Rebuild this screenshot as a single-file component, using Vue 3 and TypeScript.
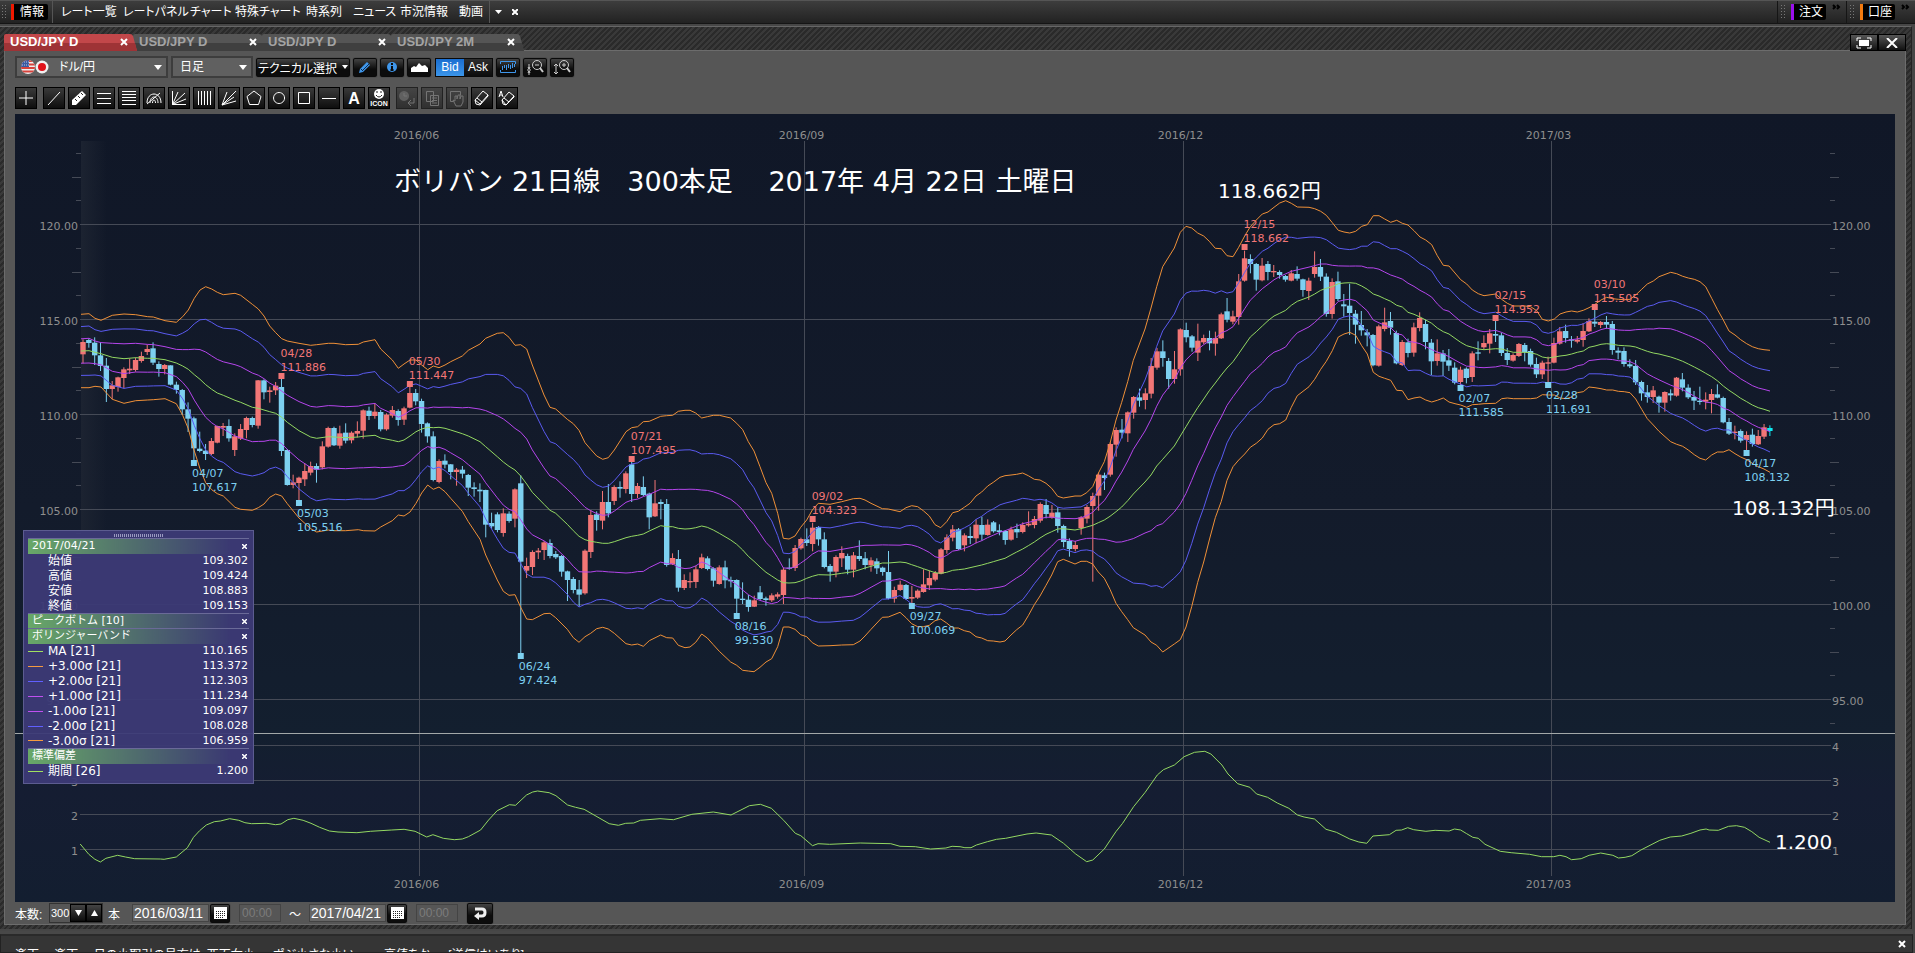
<script setup lang="ts">
import { ref } from 'vue'

interface Candle { x: number; up: boolean; high: number; top: number; bottom: number; low: number; live: boolean }
interface Peak { index: number; y: number; high: boolean; date: string; value: string }
interface Icon { name: string; d: string; fill?: string; dim?: boolean; gap?: boolean; text?: string }

const menus = ['レート一覧', 'レートパネル', 'チャート', '特殊チャート', '時系列', 'ニュース', '市況情報', '動画']
const tabs = ['USD/JPY D', 'USD/JPY D', 'USD/JPY D', 'USD/JPY 2M']
const price = ref('Bid')
const barCount = ref('300')
const fromDate = ref('2016/03/11')
const toDate = ref('2017/04/21')

const tools: Icon[] = [
  { name: '十字カーソル', d: 'M10 3v14M3 10h14' },
  { name: 'トレンドライン', d: 'M4 17L16 4', gap: true },
  { name: '定規', d: 'M6 11l2 2M9 8l2 2M12 5l2 2', fill: 'M3 12L13 3l4 4L7 17H3z' },
  { name: '平行線', d: 'M3 5.500h14M3 10.500h14M3 15.500h14' },
  { name: 'フィボナッチ', d: 'M3 3.500h14M3 6.500h14M3 9.500h14M3 12.500h14M3 16.500h14' },
  { name: 'アーク', d: 'M3 15c0-12 14-12 14 0M6 15c0-8 8-8 8 0M8.500 15c0-4 3-4 3 0M3 16L16 5' },
  { name: 'ファン', d: 'M3.500 3v13.500H17M3.500 16.500L9 4M3.500 16.500L16 5M3.500 16.500L17 11' },
  { name: 'タイムゾーン', d: 'M4.500 3v14M7.500 3v14M10.500 3v14M13.500 3v14M16.500 3v14' },
  { name: 'ギャン', d: 'M3 17L8 4M3 17L17 3M3 17L15 9M3 17L17 13' },
  { name: '五角形', d: 'M10 3L17 8.500L14.500 16.500H5.500L3 8.500z' },
  { name: '円', d: 'M10 4.500a5.500 5.500 0 1 0 .1 0z' },
  { name: '四角形', d: 'M4.500 4.500h11v11h-11z' },
  { name: '水平線', d: 'M3 10.500h14' },
  { name: '文字', d: '', text: 'A' },
  { name: 'アイコン', d: '', text: 'ICON' },
  { name: '履歴', d: 'M7 8V5M7 8h3M17 10v5h-5M14 12l-3 3 3 3', fill: 'M7 3a5 5 0 1 0 .1 0z', dim: true, gap: true },
  { name: 'コピー', d: 'M4.500 3.500h7v10h-7zM8.500 7.500h8v10h-8zM10 10h5M10 12.500h5M10 15h5', dim: true },
  { name: '移動', d: 'M3.500 3.500h10v4M3.500 3.500v10h3M8 16l-2-4 2 1V8l2 0v3l1-4h2v4l1-3h2v6l-2 4H9z', dim: true },
  { name: '消去', d: 'M3 12L11 3l5 4-8 9zM3 12l1 4 4 1 8-9V7M5 10l5 4' },
  { name: '全消去', d: 'M5 12l7-8 5 4-8 9zM5 12l1 4 3 1 8-8V8M7 10l5 4M2 9l2-6 2 6M3 7h2' },
]

const STEP = 5.837
const FIRST_X = 83
const plotX = (i: number) => FIRST_X + i * STEP

// Each block: baseline y, then one row per session "direction high top bottom low" in thirds of a pixel.
const candleBlocks: { base: number; rows: string }[] = [
  { base: 260, rows: 'u238,246,283,310 d236,240,249,263 d232,248,286,315 d248,286,318,333 d294,317,387,426 u363,376,387,418 u350,352,381,395 u322,328,354,385 u296,326,331,342 u293,300,330,335 u275,288,303,308 u254,267,276,285 d247,265,308,315 d304,312,327,350 u312,315,327,343 d316,316,374,376 d365,374,390,401 d387,390,448,465 d427,448,476,516 d470,475,565,600 d515,566,573,577 d552,572,582,600 u534,543,582,585 u497,498,548,550 u489,498,503,528 d478,498,535,545 u520,529,570,588 u492,507,536,540 u470,474,510,535 d470,474,495,502 u360,361,497,506 d358,361,397,418 u380,391,396,428 u366,377,391,405 d345,381,573,588 d567,570,675,677 u644,667,675,685 u650,653,669,725 u610,633,658,678 u605,618,638,646 d610,618,629,668 u544,559,622,628 u500,504,560,563 d500,504,556,558 u497,520,557,566 d490,518,542,550 u514,518,541,550 u484,513,521,532 u448,451,512,536 d440,452,468,480 u430,455,468,476 d450,456,508,514 u460,464,508,512 u438,450,467,473 d448,453,480,497 u440,445,479,495 u380,399,443,445 d387,399,424,436 d416,423,492,518 d487,490,529,548 d514,529,660,664 u598,603,666,670 d583,602,614,625 d612,613,636,658 u624,629,636,677 d618,629,641,655 d642,645,683,708 d667,682,687,710' },
  { base: 340, rows: 'd430,449,454,486 d449,450,554,592 d518,549,559,566 d517,523,570,577 u505,520,579,590 d514,521,543,548 u445,448,536,562 d406,430,665,940 u653,678,692,714 u631,636,681,705 u624,632,637,657 u603,607,630,660 d598,609,648,655 d633,642,652,657 d645,648,695,710 d692,694,720,783 d711,717,750,760 d720,748,764,800 u628,632,760,764 u510,525,636,654 d514,523,540,572 u453,486,542,568 d432,486,520,532 u436,441,483,495 d424,441,446,473 u394,400,447,460 d365,373,462,486 u429,438,462,474 d409,441,465,468 d458,461,532,568 u420,490,529,531 d478,486,492,538 d477,492,675,680 u640,654,673,675 d630,657,743,755 u703,720,744,750 u697,723,727,744 u677,688,726,744 u641,652,684,687 d649,655,687,691 d682,685,722,740 u676,682,732,734 d662,682,721,745 d710,720,724,742 d718,720,776,822 d727,776,780,792 d765,779,801,815 u767,781,800,801 d738,757,777,780 d770,775,780,797 u760,766,781,786 u757,763,770,776 u683,689,765,792 d655,683,686,689 u615,624,684,693 u593,597,625,629 d565,598,609,618 u548,563,612,634 d558,561,598,617 d577,598,681,685 d672,678,695,725 u646,651,695,712 u619,639,655,681 d641,648,689,703 u636,646,689,712 d601,648,657,663 d636,655,675,688 u652,661,676,695 d655,664,685,702' },
  { base: 380, rows: 'd560,563,576,587 d513,576,656,658 u620,630,656,668 u602,614,630,633 d612,615,657,660 u618,651,656,672 u628,632,653,657 u568,613,636,638 u572,594,616,630 u573,579,599,604 u504,508,581,583 u463,472,510,521 u435,448,473,484 d444,448,507,510 u460,466,496,514 d440,468,474,492 u418,434,475,490 d410,435,464,482 u418,434,465,467 d423,427,454,458 d433,451,456,466 d450,453,480,494 u440,448,479,482 d431,447,457,474 u427,435,456,460 u394,431,436,440 u408,417,435,445 u367,372,422,428 d357,375,402,415 u375,398,413,416 d382,397,438,458 d434,438,486,502 d475,483,507,530 u483,495,507,514 u408,412,444,464 u375,381,416,430 u338,348,378,605 u278,284,347,392 d278,286,294,330 u187,192,284,290 u142,150,194,230 d117,149,158,175 u94,97,160,186 u48,51,98,116 d26,52,62,80 u25,40,60,88' },
  { base: 180, rows: 'u534,558,641,655 u504,514,563,569 d481,514,534,560 d534,543,597,626 u513,568,597,611 u445,448,568,587 d428,450,472,487 d465,469,503,515 u431,482,518,543 u464,474,487,492 d452,474,490,511 u455,474,491,527 u398,403,475,477 d354,394,419,427 u392,409,425,433 u282,304,411,434 u212,235,302,305 d223,237,252,280 d249,252,299,332 u234,257,301,304 d243,252,276,301 u255,273,277,291 d271,276,285,296 d285,288,299,305 u270,280,302,304 d259,282,296,302 d296,298,330,350 u293,302,333,360 u214,261,282,293 d237,261,290,303 d280,290,402,410 u295,306,402,416 d275,304,357,363 d342,373,379,410 d311,377,399,465 d390,401,434,491 d393,435,451,467 d447,457,466,499 d462,465,556,559 u434,439,557,560 u383,427,447,454 d396,423,443,464 d452,459,550,553 u480,486,555,558 d476,487,519,532 u428,442,518,530 u397,414,444,454 d419,432,486,508 d477,488,544,585 u478,520,543,557 d510,520,545,588 d507,541,557,573 d547,563,608,613 u560,569,606,620 d562,566,594,610 u514,520,591,606 d484,517,521,541 u466,489,502,507 u447,460,491,520' },
  { base: 250, rows: 'd205,252,257,276 d248,256,309,318 d294,309,330,345 u310,315,332,335 u279,282,318,321 d279,285,307,334 d296,303,344,350 d323,342,373,384 u332,338,373,387 u320,337,341,400 u263,279,338,340 u231,244,281,284 d224,243,264,278 d258,268,272,293 u258,269,275,280 u219,243,270,290 u205,213,244,246 d175,215,221,231 u213,216,225,234 d198,216,224,236 d213,222,300,314 d292,302,308,328 d292,303,342,350 d328,343,349,354 d330,348,397,405 d392,396,430,452 d405,427,441,458 u408,421,441,459 d437,440,458,488 u424,426,458,485 d418,430,436,452 u381,383,437,440 d369,388,413,424 d403,413,442,447 d423,441,452,480 d410,452,456,464 u427,449,455,478 u417,432,450,490 d403,433,443,445 d440,444,517,520 d504,516,551,555 u527,545,549,568 d538,543,572,578 u544,555,570,600 d536,554,582,590 u540,558,583,585 u522,532,560,567 d526,534,543,558' },
]

const candles: Candle[] = candleBlocks
  .flatMap(block => block.rows.split(' ').map(row => ({
    up: row[0] === 'u',
    v: row.slice(1).split(',').map(n => block.base + Number(n) / 3),
  })))
  .map(({ up, v }, i, all) => ({
    x: plotX(i), up, high: v[0], top: v[1], bottom: v[2], low: v[3], live: i === all.length - 1,
  }))

// Moving average and +3σ readings "x,average,upper"; the other bands are spaced evenly from these two.
const bandBlocks: { x: number; y: number; rows: string }[] = [
  { x: 0, y: 260, rows: '243,273,163 267,272,161 285,277,175 303,281,181 337,292,166 372,296,162 407,293,164 443,295,170 460,295,171 495,299,182 529,309,187 548,318,170 565,328,150 583,344,115 600,358,90 617,374,80 635,388,87 652,399,97 670,406,104 705,421,100 722,427,106 757,442,133 775,445,147 792,450,168 809,455,198 827,460,218 845,472,236 862,487,243 897,512,250 932,531,256 950,535,254 985,530,250 1002,531,250 1037,533,254 1075,531,253 1090,529,246 1125,526,239 1142,534,267 1177,541,300 1195,545,325 1212,540,312 1230,528,300 1248,515,300 1265,507,315 1283,502,329 1300,503,318 1317,502,323 1335,505,315 1352,510,305 1387,521,288 1405,528,271' },
  { x: 400, y: 340, rows: '240,305,12 257,320,-5 292,350,-20 310,366,-22 327,379,-8 345,390,16 362,408,14 380,432,27 397,457,75 432,493,165 450,511,202 467,520,207 502,553,238 520,572,251 537,589,271 555,599,308 572,604,328 590,607,348 608,610,358 625,610,353 643,605,330 678,593,275 695,589,263 713,586,260 730,582,245 748,573,244 782,557,229 800,560,227 818,560,226 835,565,214 855,567,211 870,566,211 887,563,219 905,558,234 922,562,230 940,570,226 958,580,226 992,600,234 1010,613,250 1028,630,269 1045,649,305 1062,664,333 1080,681,380 1098,697,428 1115,708,460 1133,720,520 1150,728,595 1167,729,597 1185,728,588 1202,723,562 1220,715,540 1237,709,510 1255,704,490 1290,705,493 1325,700,485 1360,695,476' },
  { x: 800, y: 380, rows: '180,569,355 195,564,360 213,559,370 247,549,386 265,549,387 300,546,395 318,548,383 335,554,377 353,560,380 370,566,392 388,572,408 405,578,434 422,580,443 440,577,425 458,571,398 475,569,394 493,567,382 510,563,370 528,559,348 545,555,336 563,550,318 580,545,307 600,539,292 615,535,287 633,525,285 650,516,283 668,507,279 685,497,287 703,486,298 720,474,300 738,463,310 755,455,325 773,447,349 790,446,354 825,450,348 843,446,348 860,441,338 878,436,320 895,428,280 913,420,245 930,409,190 948,395,120 965,381,67 983,362,5 1000,342,-59 1035,306,-153 1053,285,-216' },
  { x: 1080, y: 180, rows: '230,858,320 248,838,260 283,798,204 301,768,157 318,740,139 335,712,144 353,683,159 371,657,168 388,632,184 406,609,205 424,585,206 441,564,227 459,545,230 476,521,202 494,495,168 511,471,140 529,455,120 547,438,102 564,422,96 582,408,82 599,400,69 617,391,62 634,376,70 652,364,81 687,351,82 704,342,86 722,331,94 739,325,106 757,320,128 775,311,151 792,309,156 809,308,159 827,310,154 845,318,139 862,328,134 880,342,107 897,348,107 914,356,117 932,364,127 950,376,121 967,381,130 984,397,135 1002,403,152 1020,411,171 1037,420,180 1055,430,194 1072,444,227 1090,455,256 1107,462,258 1125,475,279 1142,487,299 1160,497,312 1177,502,330 1195,507,341 1212,509,347 1247,506,342' },
  { x: 1440, y: 250, rows: '185,297,148 202,302,160 220,307,168 255,307,168 272,308,170 290,313,182 307,321,208 325,324,213 343,321,207 360,318,192 378,316,186 395,312,183 412,307,186 430,303,181 447,292,173 465,288,163 483,283,150 500,281,142 518,283,146 535,286,148 553,287,149 570,288,148 587,291,135 605,298,118 622,304,102 640,309,93 657,312,80 692,321,67 710,327,71 728,334,79 745,342,84 763,351,88 780,360,95 797,370,110 815,380,145 832,392,178 850,408,210 867,421,243 885,433,255 902,445,269 920,455,281 937,465,290 955,473,296 972,478,299 990,484,301' },
]

const bandPoints = bandBlocks.flatMap(b => b.rows.split(' ').map(row => {
  const [x, ma, up] = row.split(',').map(Number)
  return { x: b.x + x / 3, ma: b.y + ma / 3, sigma: (ma - up) / 9 }
}))

const bands = [
  { k: 3, color: '#ef9038' }, { k: -3, color: '#ef9038' },
  { k: 2, color: '#5a5af0' }, { k: -2, color: '#5a5af0' },
  { k: 1, color: '#b545ec' }, { k: -1, color: '#b545ec' },
  { k: 0, color: '#93d862' },
].map(b => ({
  ...b,
  points: bandPoints.map(p => `${p.x.toFixed(1)},${(p.ma - b.k * p.sigma).toFixed(1)}`).join(' '),
}))

const deviationBlocks: { x: number; scale: number; rows: string }[] = [
  { x: 0, scale: 1.6333, rows: '131,432 145,463 155,478 164,486 173,475 192,466 205,471 220,476 262,477 268,478 288,471 306,443 316,412 326,392 337,375 350,365 360,363 375,356 390,361 400,368 411,371 436,370 450,374 459,372 470,359 480,355 495,361 508,370 522,382 538,393 552,396 583,398 605,394 640,390 660,388 678,394 697,411 707,404 724,415 742,419 755,417 765,410 785,390 798,360 812,332 832,314 842,316 860,285 870,276 878,273 897,278 908,287 927,315 940,322 954,328 975,350 995,371 1010,376 1022,370 1035,369 1046,361 1078,356 1100,359 1130,343 1165,336 1194,345 1224,317 1242,313 1260,325 1280,361 1299,400 1308,407 1327,437 1336,431 1355,433 1405,429 1455,431 1470,439 1495,440 1520,447 1545,444 1555,439' },
  { x: 960, scale: 1.6419, rows: '0,440 8,443 18,443 27,435 45,425 60,418 75,415 110,402 125,399 150,405 170,430 190,462 208,485 218,480 237,447 256,395 267,370 285,320 304,277 324,225 334,209 352,195 368,170 385,157 402,154 412,162 430,195 440,222 456,251 476,262 487,282 505,292 521,309 540,325 554,345 565,351 582,357 601,388 618,397 640,417 655,426 668,430 678,408 705,404 716,391 725,390 735,383 745,389 765,394 780,391 803,393 812,387 822,390 832,401 842,412 851,415 862,433 887,454 905,458 935,463 955,470 975,470 985,466 995,470 1004,479 1020,476 1033,466 1052,459 1072,466 1081,474 1092,472 1103,467 1118,450 1149,421 1166,411 1185,408 1200,400 1215,390 1225,387 1230,390 1245,391 1262,379 1275,377 1288,382 1300,395 1312,412 1330,427' },
]
const deviation = deviationBlocks.flatMap(b => b.rows.split(' ').map(row => {
  const [x, y] = row.split(',').map(Number)
  return `${(b.x + x / b.scale).toFixed(1)},${(700 + y / 3).toFixed(1)}`
})).join(' ')

const peaks: Peak[] = [
  { index: 19, y: 463, high: false, date: '04/07', value: '107.617' },
  { index: 34, y: 376, high: true, date: '04/28', value: '111.886' },
  { index: 37, y: 503, high: false, date: '05/03', value: '105.516' },
  { index: 56, y: 384, high: true, date: '05/30', value: '111.447' },
  { index: 75, y: 656, high: false, date: '06/24', value: '97.424' },
  { index: 94, y: 459, high: true, date: '07/21', value: '107.495' },
  { index: 112, y: 616, high: false, date: '08/16', value: '99.530' },
  { index: 125, y: 519, high: true, date: '09/02', value: '104.323' },
  { index: 142, y: 606, high: false, date: '09/27', value: '100.069' },
  { index: 199, y: 247, high: true, date: '12/15', value: '118.662' },
  { index: 236, y: 388, high: false, date: '02/07', value: '111.585' },
  { index: 242, y: 318, high: true, date: '02/15', value: '114.952' },
  { index: 251, y: 385, high: false, date: '02/28', value: '111.691' },
  { index: 259, y: 307, high: true, date: '03/10', value: '115.505' },
  { index: 285, y: 453, high: false, date: '04/17', value: '108.132' },
]

const priceLevels = [120, 115, 110, 105, 100, 95]
const priceY = (v: number) => Math.round(224 + (120 - v) * 19) + 0.5
const ticks = Array.from({ length: 25 }, (_, i) => ({ v: 123.75 - i * 1.25, long: i % 2 === 1 }))
  .filter(t => t.v % 5 !== 0)
const levels = [4, 3, 2, 1]
const levelY = (v: number) => Math.round(745 + (4 - v) * 34.6) + 0.5
const months = [
  { x: 419.5, label: '2016/06' }, { x: 804.5, label: '2016/09' },
  { x: 1183.5, label: '2016/12' }, { x: 1551.5, label: '2017/03' },
]

const legend = [
  { head: '2017/04/21' },
  { name: '始値', value: '109.302' }, { name: '高値', value: '109.424' },
  { name: '安値', value: '108.883' }, { name: '終値', value: '109.153' },
  { head: 'ピークボトム [10]' },
  { head: 'ボリンジャーバンド' },
  { name: 'MA [21]', value: '110.165', tone: 'green' },
  { name: '+3.00σ [21]', value: '113.372', tone: 'orange' },
  { name: '+2.00σ [21]', value: '112.303', tone: 'blue' },
  { name: '+1.00σ [21]', value: '111.234', tone: 'purple' },
  { name: '-1.00σ [21]', value: '109.097', tone: 'purple' },
  { name: '-2.00σ [21]', value: '108.028', tone: 'blue' },
  { name: '-3.00σ [21]', value: '106.959', tone: 'orange' },
  { head: '標準偏差' },
  { name: '期間 [26]', value: '1.200', tone: 'green' },
]
</script>

<template>
  <div class="app" lang="ja">
    <header class="menubar">
      <i class="grip"></i>
      <button class="badge red">情報</button>
      <nav class="menu">
        <a v-for="m in menus" :key="m" href="#">{{ m }}</a>
      </nav>
      <div class="menu-end">
        <button class="plain" aria-label="メニュー"><svg width="7" height="4"><path d="M0 0h7L3.500 4z" fill="#fff" /></svg></button>
        <button class="plain" aria-label="閉じる"><svg width="6" height="6"><path d="M0 0l6 6M6 0l-6 6" stroke="#fff" stroke-width="2" /></svg></button>
      </div>
      <div class="docks">
        <div class="dock"><i class="grip"></i><button class="badge violet">注文</button><svg class="more" width="9" height="6"><path d="M1 1l2 2-2 2M5 1l2 2-2 2" /></svg></div>
        <div class="dock"><i class="grip"></i><button class="badge amber">口座</button><svg class="more" width="9" height="6"><path d="M1 1l2 2-2 2M5 1l2 2-2 2" /></svg></div>
      </div>
    </header>

    <main class="window">
      <div class="tabs">
        <div v-for="(t, i) in tabs" :key="i" class="tab" :class="{ active: i === 0 }">
          <svg class="tab-shape" viewBox="0 0 133 17" preserveAspectRatio="none">
            <path d="M0 17V2q0-2 2-2h124q2 0 3 2l4 15z" :fill="i === 0 ? '#c2474a' : '#555'" />
            <path d="M0 17V9h131l2 8z" :fill="i === 0 ? '#9e3336' : '#3f3f3f'" />
          </svg>
          <button class="tab-name">{{ t }}</button>
          <button class="tab-close" aria-label="タブを閉じる"><svg width="8" height="8"><path d="M1 1l6 6M7 1L1 7" stroke="#fff" stroke-width="2" /></svg></button>
        </div>
        <div class="window-buttons">
          <button aria-label="最大化"><svg width="16" height="12" viewBox="0 0 16 12"><path d="M3 3h10v6H3z" fill="#fff" /><path d="M1 4V1h4M11 1h4v3M15 8v3h-4M5 11H1V8" fill="none" stroke="#fff" /></svg></button>
          <button aria-label="閉じる"><svg width="12" height="10" viewBox="0 0 12 10"><path d="M1 0l10 10M11 0L1 10" stroke="#fff" stroke-width="2" /></svg></button>
        </div>
      </div>

      <section class="panel">
        <div class="toolbar">
          <label class="select pair">
            <svg class="flags" width="28" height="16" viewBox="0 0 28 16">
              <defs><clipPath id="us"><circle cx="7" cy="8" r="7" /></clipPath></defs>
              <g clip-path="url(#us)">
                <path d="M0 0h14v16H0z" fill="#eee" /><path d="M0 2h14M0 5.500h14M0 9h14M0 12.500h14" stroke="#d8433c" stroke-width="2" />
                <path d="M0 0h8v8H0z" fill="#3a5aa0" /><path d="M1 3h7M1 6h7" stroke="#b8c8e8" stroke-dasharray="1 1" />
              </g>
              <circle cx="21" cy="8" r="6.500" fill="#f0f0f0" /><circle cx="21" cy="8" r="4" fill="#e0121a" />
            </svg>
            <select aria-label="通貨ペア"><option>ドル/円</option></select>
            <svg class="caret" width="8" height="5"><path d="M0 0h8L4 5z" fill="#fff" /></svg>
          </label>
          <label class="select period">
            <select aria-label="足種"><option>日足</option></select>
            <svg class="caret" width="8" height="5"><path d="M0 0h8L4 5z" fill="#fff" /></svg>
          </label>
          <button class="btn technical">テクニカル選択<svg width="6" height="4"><path d="M0 0h6L3 4z" fill="#fff" /></svg></button>
          <button class="btn square" aria-label="描画"><svg width="14" height="14" viewBox="0 0 14 14"><path d="M2 9l7-7 3 3-7 7-4 1z" fill="#3f96ea" /><path d="M4 11l7-7M3 9l2 2" stroke="#0d2a50" /></svg></button>
          <button class="btn square" aria-label="情報"><svg width="14" height="14" viewBox="0 0 14 14"><circle cx="7" cy="7" r="5" fill="#3f96ea" /><path d="M7 3v2M7 6v4M5.500 10h3" stroke="#0a0a0a" stroke-width="2" /></svg></button>
          <button class="btn square" aria-label="エリア"><svg width="18" height="10" viewBox="0 0 18 10"><path d="M1 10V6l3-2 2 1 3-4 3 3 3-1 3 3v4z" fill="#fff" /></svg></button>
          <div class="toggle">
            <button v-for="p in ['Bid', 'Ask']" :key="p" :class="{ on: price === p }" @click="price = p">{{ p }}</button>
          </div>
          <button class="btn square" aria-label="チャート表示"><svg width="18" height="14" viewBox="0 0 18 14"><path d="M1.500 4V1.500h15V4M1.500 10v2.500h15V10" fill="none" stroke="#3f96ea" /><path d="M3.500 6v4M5.500 5v3M7.500 5v5M9.500 4v4M11.500 5v4M13.500 3v5M15.500 4v3" fill="none" stroke="#3f96ea" /></svg></button>
          <button class="btn square" aria-label="縮小"><svg width="18" height="16" viewBox="0 0 18 16"><circle cx="11" cy="6" r="4.500" fill="none" stroke="#ccc" /><path d="M14 9l3 4" stroke="#ccc" stroke-width="2" /><path d="M9 6h4M1 11h4M3 5v5M3 12v4M2 8l1 2 1-2M2 14l1-2 1 2" stroke="#ccc" fill="none" /></svg></button>
          <button class="btn square" aria-label="拡大"><svg width="18" height="16" viewBox="0 0 18 16"><circle cx="11" cy="6" r="4.500" fill="none" stroke="#ccc" /><path d="M14 9l3 4" stroke="#ccc" stroke-width="2" /><path d="M9 6h4M11 4v4M3 5v10M1 7l2-2 2 2M1 13l2 2 2-2" stroke="#ccc" fill="none" /></svg></button>
        </div>

        <div class="tools">
          <button v-for="t in tools" :key="t.name" class="tool" :class="{ gap: t.gap, dim: t.dim }" :aria-label="t.name">
            <svg viewBox="0 0 20 20" width="20" height="20">
              <path v-if="t.fill" :d="t.fill" class="solid" />
              <path v-if="t.d" :d="t.d" class="stroke" :class="{ cut: t.fill && !t.dim }" />
              <text v-if="t.text === 'A'" x="10" y="16" class="big-a">A</text>
              <template v-if="t.text === 'ICON'">
                <circle cx="10" cy="6" r="5" class="solid" />
                <path d="M8 3v2M12 3v2M7 7q3 4 6 0" class="face" />
                <text x="10" y="18" class="tiny">ICON</text>
              </template>
            </svg>
          </button>
        </div>

        <div class="chart">
          <svg class="plot" viewBox="15 114 1880 788">
            <defs>
              <linearGradient id="bg" x1="0" y1="0" x2="0" y2="1">
                <stop offset="0" stop-color="#101727" /><stop offset="0.500" stop-color="#131b2b" />
                <stop offset="0.790" stop-color="#131f2f" /><stop offset="0.860" stop-color="#151d32" /><stop offset="1" stop-color="#131e30" />
              </linearGradient>
              <linearGradient id="edge"><stop offset="0" stop-color="#1c2331" /><stop offset="1" stop-color="#1c2331" stop-opacity="0" /></linearGradient>
            </defs>
            <rect x="15" y="114" width="1880" height="788" fill="url(#bg)" />
            <rect x="81" y="141" width="26" height="592" fill="url(#edge)" />

            <g class="grid">
              <line v-for="m in months" :key="m.label" :x1="m.x" :x2="m.x" y1="141" y2="876" />
              <line v-for="v in priceLevels" :key="v" x1="80" x2="1831" :y1="priceY(v)" :y2="priceY(v)" />
              <line v-for="v in levels" :key="v" x1="80" x2="1831" :y1="levelY(v)" :y2="levelY(v)" />
              <template v-for="t in ticks" :key="t.v">
                <line :x1="t.long ? 72 : 76" x2="81" :y1="priceY(t.v)" :y2="priceY(t.v)" />
                <line x1="1830" :x2="t.long ? 1839 : 1835" :y1="priceY(t.v)" :y2="priceY(t.v)" />
              </template>
            </g>
            <line x1="15" x2="1895" y1="733.5" y2="733.5" stroke="#a2a8a8" />

            <g class="axis">
              <template v-for="m in months" :key="m.label">
                <text :x="m.x - 3" y="139" text-anchor="middle">{{ m.label }}</text>
                <text :x="m.x - 3" y="888" text-anchor="middle">{{ m.label }}</text>
              </template>
              <template v-for="v in priceLevels" :key="v">
                <text x="78" :y="priceY(v) + 5" text-anchor="end">{{ v.toFixed(2) }}</text>
                <text x="1832" :y="priceY(v) + 5">{{ v.toFixed(2) }}</text>
              </template>
              <template v-for="v in levels" :key="v">
                <text x="78" :y="levelY(v) + 5" text-anchor="end">{{ v }}</text>
                <text x="1832" :y="levelY(v) + 5">{{ v }}</text>
              </template>
            </g>

            <g v-for="(c, i) in candles" :key="i" :class="c.live ? 'live' : c.up ? 'up' : 'down'">
              <rect :x="c.x - 0.5" :y="c.high" width="1" :height="c.low - c.high" />
              <rect :x="c.x - 2.7" :y="c.top" width="5.4" :height="Math.max(c.bottom - c.top, 1)" />
            </g>

            <polyline v-for="b in bands" :key="b.k" :points="b.points" :stroke="b.color" class="line" />
            <polyline :points="deviation" stroke="#93d862" class="line" />

            <g v-for="p in peaks" :key="p.date" class="peak" :class="p.high ? 'up' : 'down'">
              <rect :x="plotX(p.index) - 3" :y="p.y - 3" width="6" height="6" />
              <text :x="plotX(p.index) - (p.high ? 1 : 2)" :y="p.high ? p.y - 19 : p.y + 14">{{ p.date }}</text>
              <text :x="plotX(p.index) - (p.high ? 1 : 2)" :y="p.high ? p.y - 5 : p.y + 28">{{ p.value }}</text>
            </g>

            <text x="394" y="191" class="title">ボリバン 21日線　300本足　 2017年 4月 22日 土曜日</text>
            <text x="1218" y="198" class="note">118.662円</text>
            <text x="1732" y="515" class="note">108.132円</text>
            <text x="1775" y="849" class="note">1.200</text>
          </svg>

          <aside class="legend">
            <i class="drag"></i>
            <table>
              <colgroup><col class="c-key"><col><col class="c-value"></colgroup>
              <tbody>
                <tr v-for="(r, i) in legend" :key="i" :class="{ head: r.head }">
                  <template v-if="r.head">
                    <th colspan="3">
                      <span>{{ r.head }}</span>
                      <button class="plain" aria-label="閉じる"><svg width="5" height="5"><path d="M0 0l5 5M5 0L0 5" stroke="#fff" stroke-width="1.500" /></svg></button>
                    </th>
                  </template>
                  <template v-else>
                    <td><i v-if="r.tone" class="key" :class="r.tone"></i></td>
                    <td class="name">{{ r.name }}</td>
                    <td class="value">{{ r.value }}</td>
                  </template>
                </tr>
              </tbody>
            </table>
          </aside>
        </div>

        <form class="range" @submit.prevent>
          <label for="count">本数:</label>
          <div class="stepper">
            <input id="count" v-model="barCount" type="text">
            <button type="button" aria-label="減らす"><svg width="7" height="6"><path d="M0 0h7L3.500 6z" fill="#fff" /></svg></button>
            <button type="button" aria-label="増やす"><svg width="7" height="6"><path d="M0 6h7L3.500 0z" fill="#fff" /></svg></button>
          </div>
          <span class="unit">本</span>
          <div class="field">
            <input v-model="fromDate" class="date" type="text" aria-label="開始日">
            <button type="button" class="btn cal" aria-label="カレンダー"><svg width="13" height="12"><path d="M0 0h13v12H0z" fill="#fff" /><path d="M2 4.500h9M2 6.500h9M2 8.500h9M2 10.500h7" stroke="#222" stroke-dasharray="1 1" /></svg></button>
          </div>
          <input class="time" type="text" value="00:00" disabled aria-label="開始時刻">
          <span class="tilde">～</span>
          <div class="field">
            <input v-model="toDate" class="date" type="text" aria-label="終了日">
            <button type="button" class="btn cal" aria-label="カレンダー"><svg width="13" height="12"><path d="M0 0h13v12H0z" fill="#fff" /><path d="M2 4.500h9M2 6.500h9M2 8.500h9M2 10.500h7" stroke="#222" stroke-dasharray="1 1" /></svg></button>
          </div>
          <input class="time" type="text" value="00:00" disabled aria-label="終了時刻">
          <button type="button" class="btn reset" aria-label="元に戻す"><svg width="14" height="13" viewBox="0 0 14 13"><path d="M2 2h7q3 0 3 3.500T9 9H5" fill="none" stroke="#eee" stroke-width="3" /><path d="M6 5v8L1 9z" fill="#eee" /></svg></button>
        </form>
      </section>
    </main>

    <footer class="news">
      <p>楽天:　楽天:　日の小取引の見方は、西百女小、　ポジ小さな小い、　　高値をか、　[送信はいあり]</p>
      <button class="plain" aria-label="閉じる"><svg width="8" height="8"><path d="M1 1l6 6M7 1L1 7" stroke="#fff" stroke-width="2" /></svg></button>
    </footer>
  </div>
</template>

<style>
body { margin: 0; background: #2e2e2e; }
</style>

<style scoped>
.app {
  height: 100vh;
  overflow: hidden;
  display: flex;
  flex-direction: column;
  background: #464646;
  color: #fff;
  font: 12px "Liberation Sans", "Noto Sans CJK JP", sans-serif;
  font-feature-settings: "palt";
}
.app * { box-sizing: border-box; }
button, input, select { font: inherit; font-feature-settings: inherit; color: inherit; margin: 0; padding: 0; border: 0; background: none; border-radius: 0; }
button svg { display: block; }

.menubar {
  height: 24px;
  flex: none;
  display: flex;
  align-items: center;
  background: linear-gradient(#3d3d3d, #222);
  border-top: 1px solid #555;
  border-bottom: 1px solid #151515;
}
.grip { width: 6px; height: 16px; margin: 0 4px 0 1px; background: radial-gradient(circle, #777 1px, transparent 1px) 0 0 / 3px 3px; }
.badge { height: 16px; padding: 0 3px 0 5px; line-height: 16px; background: #000; border-left: 3px solid; border-radius: 0 2px 2px 0; color: #fff; }
.badge.red { border-left-color: #f01800; padding: 0 4px 0 6px; }
.badge.violet { border-left-color: #9b10ee; }
.badge.amber { border-left-color: #f07a10; }
.menu { display: grid; grid-template-columns: 62px 67px 45px 71px 47px 47px 59px 30px; margin-left: 4px; padding-left: 8px; border-left: 1px solid #555; line-height: 22px; }
.menu a { color: #fff; text-decoration: none; white-space: nowrap; }
.menu-end { display: flex; align-items: center; gap: 10px; height: 22px; padding-left: 5px; border-left: 1px solid #555; }
.docks { display: flex; margin-left: auto; }
.dock { display: flex; align-items: center; height: 22px; width: 69px; border-left: 1px solid #151515; }
.dock .grip { margin: 0 5px 0 2px; }
.dock .badge { margin-right: 6px; }
.more { align-self: flex-start; margin-top: 3px; fill: none; stroke: #000; stroke-width: 2; flex: none; }

.window {
  flex: none;
  margin: 2px 3px 0 0;
  padding: 7px 5px 4px 4px;
  border-top: 1px solid #666;
  border-right: 1px solid #222;
  background: repeating-linear-gradient(135deg, #2a2a2a 0 2px, #393939 2px 4px);
}
.tabs { display: flex; height: 16px; }
.tab { position: relative; width: 129px; height: 16px; display: flex; align-items: center; padding-left: 6px; color: #a4a4a4; }
.tab.active { color: #fff; z-index: 1; }
.tab-shape { position: absolute; left: 0; top: 0; width: 133px; height: 17px; }
.tab-name, .tab-close { position: relative; }
.tab-name { font-weight: bold; font-size: 13px; line-height: 16px; }
.tab-close { margin: 0 5px 0 auto; }
.window-buttons { margin-left: auto; display: flex; }
.window-buttons button { width: 28px; height: 17px; border: 1px solid #000; background: linear-gradient(#555, #111); display: grid; place-items: center; }

.panel { background: #565656; border: 1px solid #6c6c6c; padding: 5px 10px 0; }
.toolbar { display: flex; align-items: center; height: 22px; }
.select { position: relative; display: flex; align-items: center; height: 22px; border: 2px solid #3d3d3d; background: #606060; }
.pair { width: 153px; margin-right: 3px; }
.period { width: 82px; margin-right: 3px; }
.select select { appearance: none; flex: 1; min-width: 0; height: 18px; font-size: 12px; padding-left: 7px; }
.pair select { padding-left: 10px; }
.flags { margin-left: 4px; flex: none; }
.caret { position: absolute; right: 4px; top: 7px; pointer-events: none; }
.btn { border: 1px solid #0a0a0a; border-radius: 2px; background: linear-gradient(#424242, #0c0c0c 60%); height: 19px; display: flex; align-items: center; justify-content: center; box-shadow: 0 0 1px #000; }
.technical { width: 94px; gap: 5px; margin-right: 3px; white-space: nowrap; }
.square { width: 24px; margin-right: 3px; }
.toggle { display: flex; width: 58px; height: 19px; margin: 0 3px 0 1px; border: 1px solid #0a0a0a; background: linear-gradient(#2e2e2e, #0c0c0c); }
.toggle button { flex: 1; line-height: 17px; }
.toggle .on { background: linear-gradient(#1a6ed0, #3b95ea); }

.tools { display: flex; gap: 3px; margin-top: 9px; height: 22px; }
.tool { width: 22px; height: 22px; border: 1px solid #000; background: linear-gradient(#3a3a3a, #0e0e0e); display: grid; place-items: center; }
.tool.gap { margin-left: 3px; }
.tool .stroke { fill: none; stroke: #fff; }
.tool .solid { fill: #fff; }
.tool .cut { stroke: #222; }
.tool .face { fill: none; stroke: #222; stroke-width: 1px; }
.big-a { font: bold 16px "Liberation Sans", sans-serif; fill: #fff; text-anchor: middle; }
.tiny { font: bold 7px "Liberation Sans", sans-serif; fill: #fff; text-anchor: middle; }
.tool.dim { background: linear-gradient(#454545, #303030); border-color: #222; }
.tool.dim .stroke { stroke: #747474; }
.tool.dim .solid { fill: #606060; }

.chart { position: relative; margin-top: 5px; }
.plot { display: block; width: 100%; height: auto; font-family: "DejaVu Sans", "Noto Sans CJK JP", sans-serif; font-feature-settings: normal; }
.grid line { stroke: #454a56; }
.axis text { font-size: 11px; fill: #8e8e8e; }
.up { fill: #f27676; }
.down { fill: #7dd0f0; }
.live { fill: #10e8f0; }
.peak text { font-size: 11px; }
.line { fill: none; stroke-width: 1px; }
.title { font-size: 27px; fill: #fff; white-space: pre; }
.note { font-size: 20px; fill: #fff; }

.legend {
  position: absolute;
  left: 8px;
  top: 416px;
  width: 231px;
  height: 254px;
  padding: 3px 4px 0;
  background: rgba(60, 58, 118, 0.95);
  border: 1px solid #5c5c90;
  font: 11px/15px "DejaVu Sans", "Noto Sans CJK JP", sans-serif;
}
.drag { display: block; width: 50px; height: 3px; margin: 0 auto 1px; background: repeating-linear-gradient(90deg, #9a9ac0 0 1px, transparent 1px 2px); }
.legend table { width: 100%; border-collapse: collapse; table-layout: fixed; }
.c-key { width: 20px; }
.c-value { width: 70px; }
.legend td, .legend th { height: 15px; padding: 0; line-height: 14px; font-weight: normal; text-align: left; white-space: nowrap; }
.legend .head th { background: linear-gradient(90deg, #68a868, transparent 92%); border-top: 1px solid #6a6a98; padding: 0 2px 0 4px; }
.legend th span { display: inline-block; line-height: 14px; }
.legend th button { float: right; margin-top: 5px; }
.key { display: block; width: 15px; height: 1px; }
.green { background: #a0e060; }
.orange { background: #f59a40; }
.blue { background: #6060ff; }
.purple { background: #c050f0; }
.legend .name { font-size: 12px; }
.legend .value { text-align: right; padding-right: 1px; }

.range { display: flex; align-items: center; height: 22px; font-size: 12px; }
.range label { width: 34px; }
.stepper { display: flex; height: 20px; width: 54px; border: 1px solid #333; }
.stepper input { width: 20px; padding-left: 1px; font-size: 11px; }
.stepper button { flex: 1; border: 1px solid #000; background: linear-gradient(#444, #0c0c0c); display: grid; place-items: center; }
.unit { width: 29px; padding-left: 5px; }
.field { display: flex; align-items: center; gap: 1px; margin-right: 9px; }
.date { width: 77px; height: 18px; border: 1px solid #444; background: #666; padding-left: 1px; font-size: 14px; }
.cal { width: 20px; }
.time { width: 42px; height: 18px; border: 1px solid #444; color: #7c7c7c; padding-left: 2px; }
.tilde { width: 28px; text-align: center; }
.reset { width: 26px; height: 21px; margin-left: 9px; }

.news { flex: 1; min-height: 0; display: flex; align-items: flex-start; margin: 5px 2px 0 0; border: 1px solid #222; background: #353535; border-top: 2px solid #2a2a2a; box-shadow: 0 -3px 0 #484848; overflow: hidden; }
.news p { margin: 12px 0 0 14px; line-height: 14px; white-space: nowrap; }
.news button { margin: 4px 6px 0 auto; }
</style>
